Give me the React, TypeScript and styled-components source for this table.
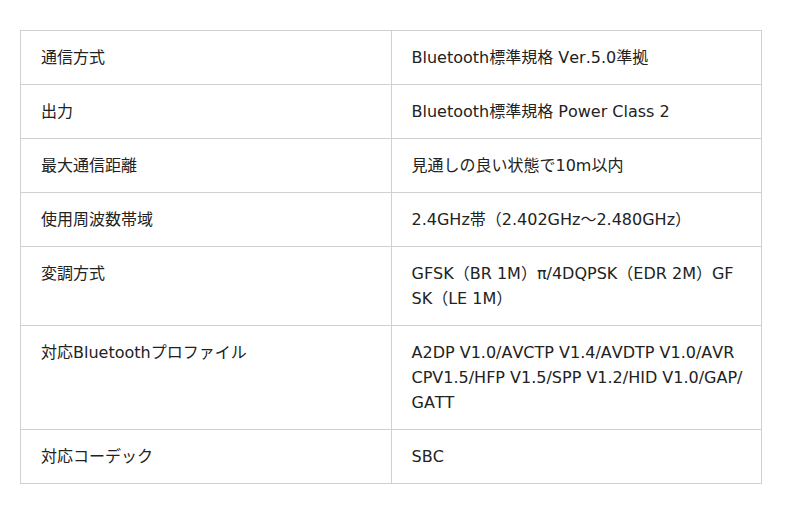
import React from 'react';
import styled, { createGlobalStyle } from 'styled-components';

const GlobalStyle = createGlobalStyle`
    body {
        margin: 0;
        background: #fff;
        font-family: "DejaVu Sans", "Noto Sans CJK JP", sans-serif;
        color: #222;
    }
`;

const specs = [
    ['通信方式', 'Bluetooth標準規格 Ver.5.0準拠'],
    ['出力', 'Bluetooth標準規格 Power Class 2'],
    ['最大通信距離', '見通しの良い状態で10m以内'],
    ['使用周波数帯域', '2.4GHz帯（2.402GHz〜2.480GHz）'],
    ['変調方式', 'GFSK（BR 1M）π/4DQPSK（EDR 2M）GFSK（LE 1M）'],
    ['対応Bluetoothプロファイル', 'A2DP V1.0/AVCTP V1.4/AVDTP V1.0/AVRCPV1.5/HFP V1.5/SPP V1.2/HID V1.0/GAP/GATT'],
    ['対応コーデック', 'SBC'],
];

const App = () => {
    return (
        <Page>
            <GlobalStyle />
            <SpecTable>
                <tbody>
                    {specs.map(([label, value]) => (
                        <tr key={label}>
                            <Cell>{label}</Cell>
                            <Cell>{value}</Cell>
                        </tr>
                    ))}
                </tbody>
            </SpecTable>
        </Page>
    );
}

const Page = styled.div`
    padding: 30px 38px 0 20px;
`;

const SpecTable = styled.table`
    width: 742px;
    border-collapse: collapse;
    table-layout: fixed;
`;

const Cell = styled.td`
    width: 50%;
    border: 1px solid #d0d0d0;
    padding: 14px 18.5px 14px 20px;
    font-size: 16px;
    line-height: 25px;
    font-kerning: none;
    vertical-align: top;
    word-break: break-all;
    text-align: left;
`;

export default App;
